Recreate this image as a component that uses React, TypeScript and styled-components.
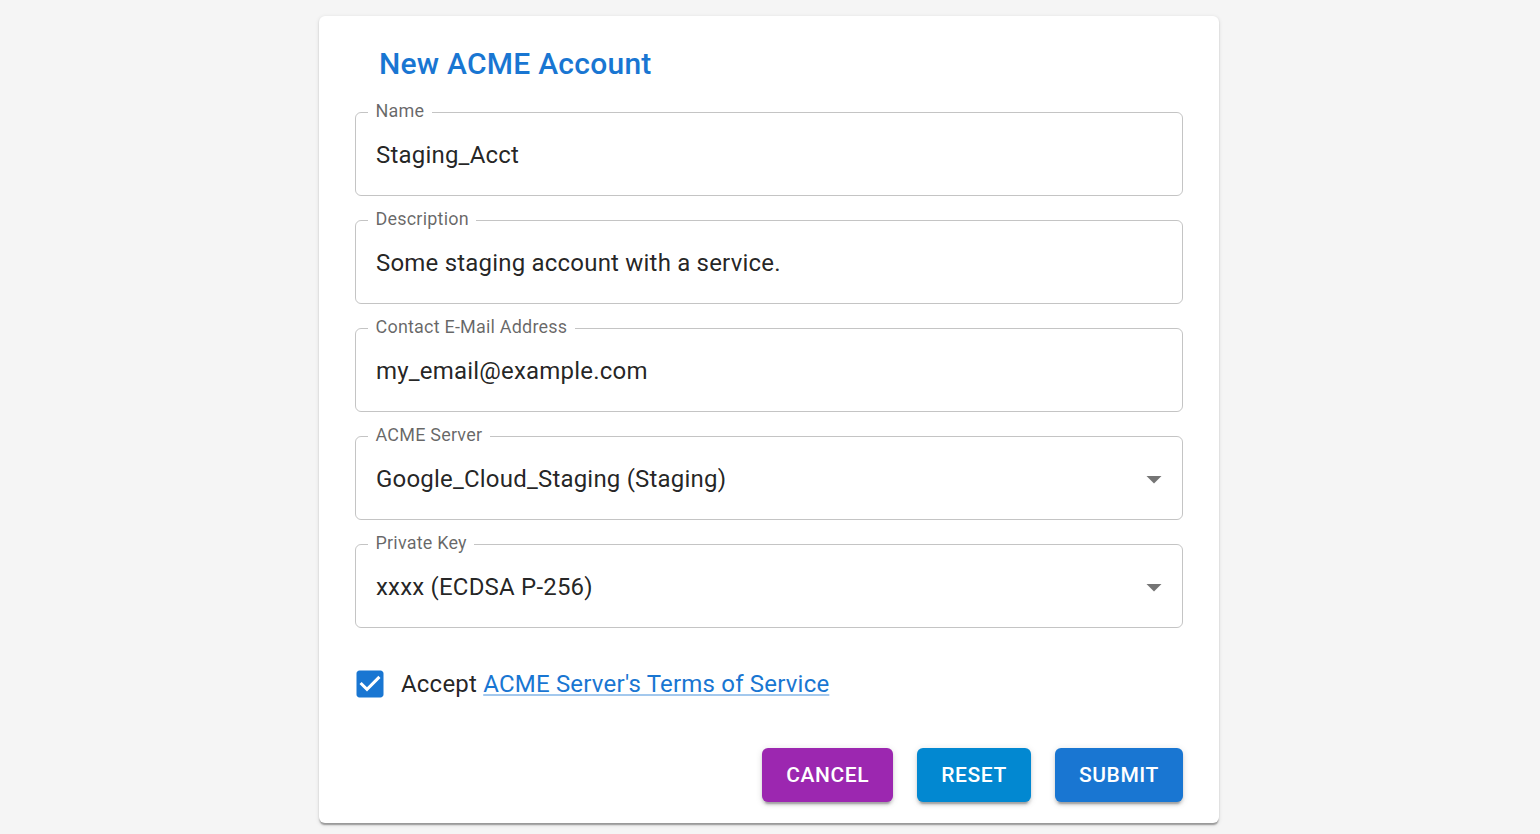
import React from "react";
import styled, { createGlobalStyle } from "styled-components";

const GlobalStyle = createGlobalStyle`
  html, body {
    margin: 0;
    padding: 0;
    background: #f5f5f5;
    font-family: Roboto, "Liberation Sans", Arial, sans-serif;
    color: rgba(0, 0, 0, 0.87);
  }
  * { box-sizing: border-box; }
`;

const Page = styled.div`
  display: flex;
  justify-content: center;
  padding: 16px 2px 0 0;
  min-height: 834px;
`;

const Card = styled.form`
  width: 900px;
  align-self: flex-start;
  background: #fff;
  border-radius: 6px;
  box-shadow: 0px 3px 1.5px -1.5px rgba(0, 0, 0, 0.2),
    0px 1.5px 1.5px 0px rgba(0, 0, 0, 0.14),
    0px 1.5px 4.5px 0px rgba(0, 0, 0, 0.12);
  padding: 24px 36px 21px;
  display: flex;
  flex-direction: column;
`;

const Title = styled.h2`
  margin: 0 0 15px 24px;
  font-size: 30px;
  line-height: 48px;
  font-weight: 500;
  letter-spacing: 0.25px;
  color: #1976d2;
`;

const Fields = styled.div`
  display: flex;
  flex-direction: column;
  gap: 15px;
`;

const Field = styled.fieldset`
  margin: 0;
  padding: 0 12px;
  border: 1px solid rgba(0, 0, 0, 0.23);
  border-radius: 6px;
  min-width: 0;
`;

const Legend = styled.legend`
  padding: 0 7.5px 2px;
  font-size: 18px;
  line-height: 16px;
  color: rgba(0, 0, 0, 0.6);
  letter-spacing: 0.2px;
`;

const Value = styled.div<{ $select?: boolean }>`
  display: flex;
  align-items: center;
  justify-content: space-between;
  padding: 17px ${(p) => (p.$select ? "0" : "8px")} 23px 8px;
  font-size: 24px;
  line-height: 34px;
  height: 74px;
  letter-spacing: 0.2px;
  color: rgba(0, 0, 0, 0.87);
`;

const Arrow = styled.svg`
  width: 36px;
  height: 36px;
  margin: -1px -1.5px -1px 0;
  fill: rgba(0, 0, 0, 0.54);
  flex: none;
`;

const CheckRow = styled.label`
  display: flex;
  align-items: center;
  gap: 13.5px;
  margin-top: 28.5px;
  height: 54px;
  font-size: 24px;
  line-height: 36px;
  letter-spacing: 0.2px;
`;

const CheckIcon = styled.svg`
  width: 36px;
  height: 36px;
  margin-left: -3.5px;
  fill: #1976d2;
  flex: none;
`;

const Link = styled.a`
  color: #1976d2;
  text-decoration: underline;
  text-decoration-color: rgba(25, 118, 210, 0.4);
`;

const Actions = styled.div`
  display: flex;
  justify-content: flex-end;
  gap: 24px;
  margin-top: 37.5px;
`;

const Button = styled.button<{ $color: string }>`
  height: 54px;
  padding: 0 24px;
  border: none;
  border-radius: 6px;
  background: ${(p) => p.$color};
  color: #fff;
  font-family: Roboto, "Liberation Sans", Arial, sans-serif;
  font-size: 21px;
  font-weight: 500;
  letter-spacing: 0.6px;
  text-transform: uppercase;
  box-shadow: 0px 4.5px 1.5px -3px rgba(0, 0, 0, 0.2),
    0px 3px 3px 0px rgba(0, 0, 0, 0.14),
    0px 1.5px 7.5px 0px rgba(0, 0, 0, 0.12);
  cursor: pointer;
`;

const fields: { label: string; value: string; select?: boolean }[] = [
  { label: "Name", value: "Staging_Acct" },
  { label: "Description", value: "Some staging account with a service." },
  { label: "Contact E-Mail Address", value: "my_email@example.com" },
  { label: "ACME Server", value: "Google_Cloud_Staging (Staging)", select: true },
  { label: "Private Key", value: "xxxx (ECDSA P-256)", select: true },
];

export default function App() {
  return (
    <>
      <GlobalStyle />
      <Page>
        <Card onSubmit={(e) => e.preventDefault()}>
          <Title>New ACME Account</Title>
          <Fields>
            {fields.map((f) => (
              <Field key={f.label}>
                <Legend>{f.label}</Legend>
                <Value $select={f.select}>
                  <span>{f.value}</span>
                  {f.select && (
                    <Arrow viewBox="0 0 24 24">
                      <path d="M7 10l5 5 5-5z" />
                    </Arrow>
                  )}
                </Value>
              </Field>
            ))}
          </Fields>
          <CheckRow>
            <CheckIcon viewBox="0 0 24 24">
              <path d="M19 3H5c-1.11 0-2 .9-2 2v14c0 1.1.89 2 2 2h14c1.11 0 2-.9 2-2V5c0-1.1-.89-2-2-2zm-9 14l-5-5 1.41-1.41L10 14.17l7.59-7.59L19 8l-9 9z" />
            </CheckIcon>
            <span>
              Accept <Link href="#">ACME Server's Terms of Service</Link>
            </span>
          </CheckRow>
          <Actions>
            <Button type="button" $color="#9c27b0">Cancel</Button>
            <Button type="button" $color="#0288d1">Reset</Button>
            <Button type="submit" $color="#1976d2">Submit</Button>
          </Actions>
        </Card>
      </Page>
    </>
  );
}
